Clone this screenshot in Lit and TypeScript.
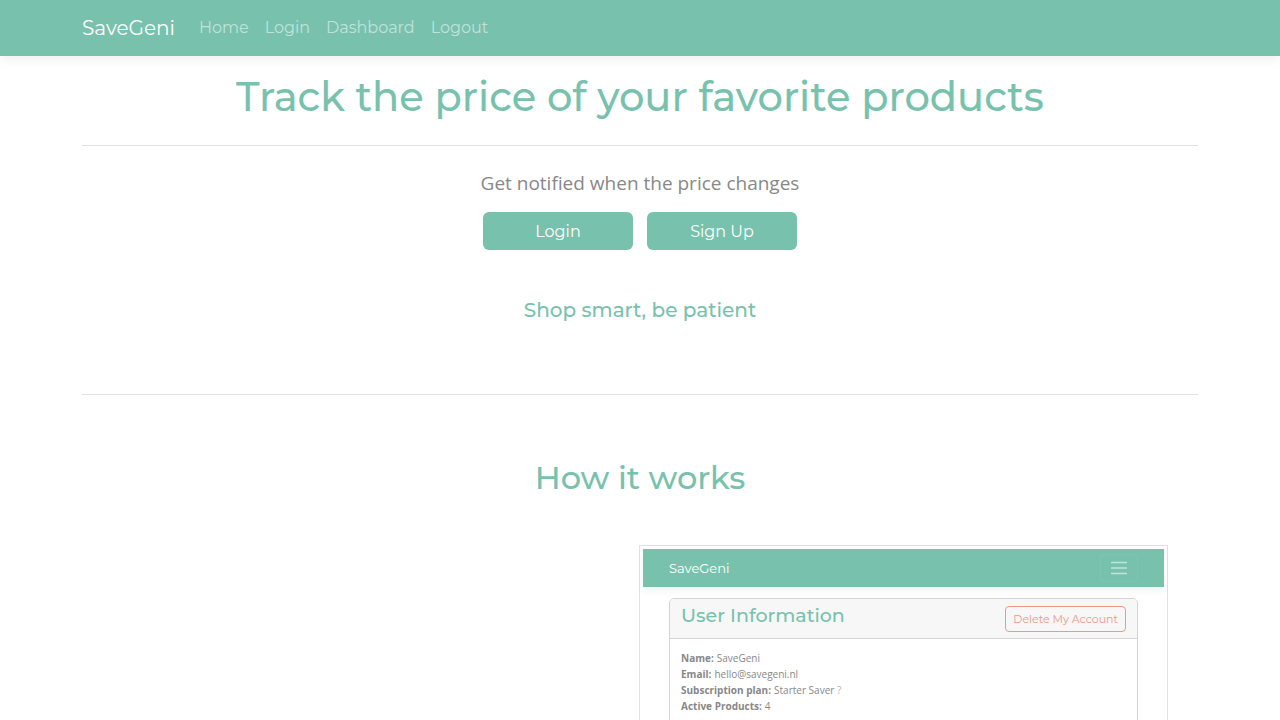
import { LitElement, html, css } from "lit";
import { customElement } from "lit/decorators.js";

const NAV_LINKS = ["Home", "Login", "Dashboard", "Logout"];

const ACCOUNT_DETAILS = [
  ["Name", "SaveGeni"],
  ["Email", "hello@savegeni.nl"],
  ["Subscription plan", "Starter Saver"],
  ["Active Products", "4"],
];

@customElement("account-preview")
class AccountPreview extends LitElement {
  static styles = css`
    :host {
      display: block;
      border: 1px solid #dee2e6;
      padding: 3px;
      background: #fff;
      color: #888;
      font-family: "Segoe UI", "Open Sans", "Noto Sans", sans-serif;
      font-size: 10px;
      line-height: 16px;
    }
    .bar {
      display: flex;
      align-items: center;
      justify-content: space-between;
      height: 38px;
      padding: 0 26px;
      background: #78c2ad;
      box-shadow: 0 4px 8px rgba(0, 0, 0, 0.05);
    }
    .brand {
      font-family: Montserrat, Inter, sans-serif;
      font-size: 13px;
      color: #fff;
      text-decoration: none;
    }
    .toggle {
      display: flex;
      padding: 4px 10px;
      border: 1px solid rgba(255, 255, 255, 0.05);
      border-radius: 4px;
      background: none;
    }
    .card {
      margin: 11px 26px 0;
      border: 1px solid #d3d4d5;
      border-radius: 5px;
    }
    .head {
      display: flex;
      align-items: center;
      justify-content: space-between;
      height: 39px;
      padding: 0 11px;
      border-bottom: 1px solid #d3d4d5;
      border-radius: 4px 4px 0 0;
      background: #f7f7f7;
    }
    .title {
      margin: 0;
      padding-bottom: 5px;
      font-family: Montserrat, Inter, sans-serif;
      font-size: 19px;
      line-height: 24px;
      font-weight: 500;
      color: #78c2ad;
    }
    .delete {
      height: 26px;
      padding: 0 7px;
      border: 1px solid #f0968a;
      border-radius: 4px;
      background: none;
      font-family: Montserrat, Inter, sans-serif;
      font-size: 11px;
      color: #f0968a;
    }
    .details {
      margin: 0;
      padding: 11px 11px 24px;
    }
    .row {
      display: flex;
      gap: 3px;
    }
    .term {
      font-weight: 700;
    }
    .value {
      margin: 0;
    }
    .hint {
      color: #b4b4b4;
    }
  `;

  render() {
    return html`
      <div class="bar">
        <a class="brand" href="#">SaveGeni</a>
        <button class="toggle" aria-label="Toggle navigation">
          <svg width="16" height="18" viewBox="0 0 16 18" fill="none" stroke="#fff" stroke-opacity=".55" stroke-width="1.3" stroke-linecap="round">
            <path d="M.5 3.5h15M.5 9h15M.5 14.5h15" />
          </svg>
        </button>
      </div>
      <section class="card">
        <header class="head">
          <h3 class="title">User Information</h3>
          <button class="delete">Delete My Account</button>
        </header>
        <dl class="details">
          ${ACCOUNT_DETAILS.map(
            ([term, value]) => html`
              <div class="row">
                <dt class="term">${term}:</dt>
                <dd class="value">
                  ${value}
                  ${term === "Subscription plan" ? html`<span class="hint">?</span>` : ""}
                </dd>
              </div>
            `
          )}
        </dl>
      </section>
    `;
  }
}

@customElement("app-root")
class AppRoot extends LitElement {
  static styles = css`
    :host {
      display: block;
      height: 100vh;
      overflow: hidden;
      background: #fff;
      color: #888;
      font-family: "Segoe UI", "Open Sans", "Noto Sans", sans-serif;
      font-size: 16px;
      line-height: 24px;
    }
    .navbar {
      background: #78c2ad;
      box-shadow: 0 2px 12px rgba(0, 0, 0, 0.08);
      font-family: Montserrat, Inter, sans-serif;
    }
    .container {
      box-sizing: border-box;
      max-width: 1140px;
      margin: 0 auto;
      padding: 0 12px;
    }
    .bar {
      display: flex;
      align-items: center;
      height: 56px;
    }
    .brand {
      margin-right: 24px;
      font-size: 20px;
      color: #fff;
      text-decoration: none;
    }
    .links {
      display: flex;
      gap: 16px;
      margin: 0;
      padding: 0;
      list-style: none;
    }
    .link {
      font-size: 16px;
      color: rgba(255, 255, 255, 0.55);
      text-decoration: none;
    }
    .heading {
      margin: 0;
      font-family: Montserrat, Inter, sans-serif;
      font-weight: 500;
      text-align: center;
      color: #78c2ad;
    }
    .hero {
      padding-top: 17px;
      font-size: 40px;
      line-height: 48px;
    }
    .rule {
      margin: 24px 0;
      border: 0;
      border-top: 1px solid #dfe2e2;
    }
    .lead {
      margin: 0 0 16px;
      font-size: 19px;
      line-height: 26px;
      text-align: center;
    }
    .actions {
      display: flex;
      justify-content: center;
      gap: 14px;
      margin-bottom: 48px;
    }
    .button {
      width: 150px;
      height: 38px;
      padding: 0;
      border: 0;
      border-radius: 6px;
      background: #78c2ad;
      font-family: Montserrat, Inter, sans-serif;
      font-size: 16px;
      color: #fff;
    }
    .slogan {
      margin-bottom: 72px;
      font-size: 20px;
      line-height: 24px;
    }
    .how {
      padding-top: 40px;
      font-size: 32px;
      line-height: 38px;
    }
    .steps {
      display: grid;
      grid-template-columns: 1fr 1fr;
      padding: 48px 30px 0;
    }
    .shot {
      grid-column: 2;
      margin-left: -1px;
    }
  `;

  render() {
    return html`
      <nav class="navbar">
        <div class="container bar">
          <a class="brand" href="#">SaveGeni</a>
          <ul class="links">
            ${NAV_LINKS.map((label) => html`<li><a class="link" href="#">${label}</a></li>`)}
          </ul>
        </div>
      </nav>
      <main class="container">
        <h1 class="heading hero">Track the price of your favorite products</h1>
        <hr class="rule" />
        <p class="lead">Get notified when the price changes</p>
        <div class="actions">
          <button class="button">Login</button>
          <button class="button">Sign Up</button>
        </div>
        <h5 class="heading slogan">Shop smart, be patient</h5>
        <hr class="rule" />
        <h2 class="heading how">How it works</h2>
        <div class="steps">
          <account-preview class="shot"></account-preview>
        </div>
      </main>
    `;
  }
}
